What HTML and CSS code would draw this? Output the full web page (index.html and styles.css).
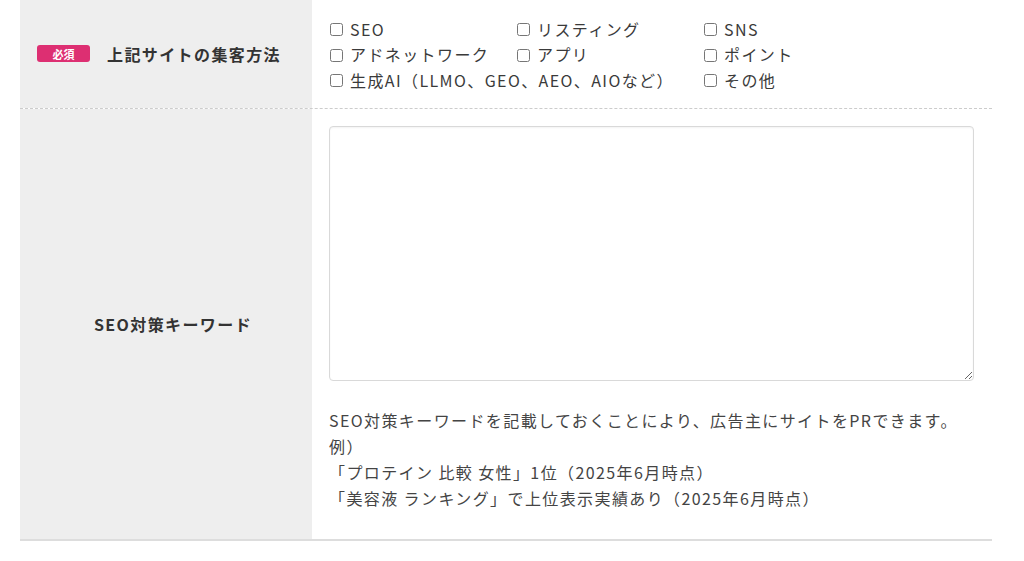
FILE: index.html
```html
<!DOCTYPE html>
<html lang="ja">
<head>
<meta charset="utf-8">
<link rel="stylesheet" href="styles.css">
</head>
<body>
<div class="form">
  <div class="row row-dashed">
    <div class="label label-left">
      <span class="badge">必須</span>
      <span class="label-text">上記サイトの集客方法</span>
    </div>
    <div class="field field-checks">
      <div class="checks">
        <label class="check"><input type="checkbox"><span>SEO</span></label>
        <label class="check"><input type="checkbox"><span>リスティング</span></label>
        <label class="check"><input type="checkbox"><span>SNS</span></label>
        <label class="check"><input type="checkbox"><span>アドネットワーク</span></label>
        <label class="check"><input type="checkbox"><span>アプリ</span></label>
        <label class="check"><input type="checkbox"><span>ポイント</span></label>
        <label class="check check-wide"><input type="checkbox"><span>生成AI（LLMO、GEO、AEO、AIOなど）</span></label>
        <label class="check"><input type="checkbox"><span>その他</span></label>
      </div>
    </div>
  </div>
  <div class="row row-solid">
    <div class="label label-center">
      <span class="label-text">SEO対策キーワード</span>
    </div>
    <div class="field field-text">
      <textarea class="textarea"></textarea>
      <p class="help">SEO対策キーワードを記載しておくことにより、広告主にサイトをPRできます。<br>例）<br>「プロテイン 比較 女性」1位（2025年6月時点）<br>「美容液 ランキング」で上位表示実績あり（2025年6月時点）</p>
    </div>
  </div>
</div>
</body>
</html>
```

FILE: styles.css
```css
html, body {
  margin: 0;
  padding: 0;
  background: #ffffff;
}

body {
  font-family: "Noto Sans CJK JP", "Noto Sans", sans-serif;
  color: #333333;
  font-size: 16px;
  letter-spacing: 1.4px;
}

.form {
  margin-left: 20px;
  width: 972px;
}

.row {
  display: grid;
  grid-template-columns: 292px 1fr;
}

.row-dashed {
  border-bottom: 1px dashed #cccccc;
}

.row-solid {
  border-bottom: 2px solid #dddddd;
}

.label {
  background: #eeeeee;
  display: flex;
  align-items: center;
}

.label-left {
  padding-left: 17px;
  gap: 17px;
}

.label-center {
  justify-content: center;
  padding-left: 14px;
}

.label-text {
  font-weight: bold;
  font-size: 16px;
  color: #333333;
}

.badge {
  display: inline-flex;
  align-items: center;
  justify-content: center;
  width: 53px;
  height: 17px;
  border-radius: 3px;
  background: #dd2f72;
  color: #ffffff;
  font-size: 11px;
  font-weight: bold;
  letter-spacing: 0;
}

.field-checks {
  padding: 16px 17px 15px 17px;
}

.checks {
  display: grid;
  grid-template-columns: 187px 187px 187px;
  grid-auto-rows: 25.5px;
}

.check {
  display: flex;
  align-items: center;
  font-size: 16px;
  white-space: nowrap;
  color: #3a3a3a;
}

.check-wide {
  grid-column: span 2;
}

.check input {
  width: 13px;
  height: 13px;
  margin: 2px 7px 0 1px;
}

.field-text {
  padding: 17px 18px 28px 17px;
}

.textarea {
  display: block;
  width: 100%;
  height: 255px;
  box-sizing: border-box;
  border: 1px solid #d9d9d9;
  border-radius: 4px;
  box-shadow: inset 0 1px 2px rgba(0,0,0,0.05);
  resize: vertical;
  margin: 0;
}

.help {
  margin: 26px 0 0 0;
  line-height: 26px;
  font-size: 16px;
  color: #444444;
}
```
